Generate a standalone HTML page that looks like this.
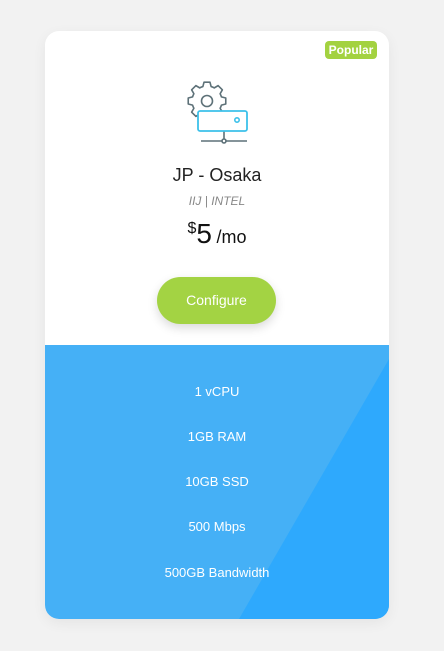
<!DOCTYPE html>
<html><head><style>
body{margin:0;width:444px;height:651px;background:#f2f2f2;font-family:"Liberation Sans",sans-serif;position:relative;overflow:hidden}
.card{position:absolute;left:45px;top:31px;width:344px;height:588px;border-radius:14px;background:#fff;overflow:hidden;box-shadow:0 4px 14px rgba(0,0,0,.06)}
.badge{position:absolute;left:280px;top:10px;width:52px;height:18px;background:#a3d240;border-radius:4px;color:#fff;font-weight:bold;font-size:12px;line-height:18px;text-align:center}
.t{position:absolute;left:0;width:344px;text-align:center}
.blue{position:absolute;left:0;top:314px;width:344px;height:274px;background:#45b0f6}
.btn{position:absolute;left:112px;top:246px;width:119px;height:47px;border-radius:24px;background:#a3d343;color:#fff;font-size:14px;line-height:47px;text-align:center;box-shadow:0 4px 10px rgba(0,0,0,.15)}
.f{position:absolute;left:0;width:344px;text-align:center;color:#fff;font-size:13px}
</style></head><body>
<div class="card">
<div class="badge">Popular</div>
<svg style="position:absolute;left:140px;top:48px" width="68" height="66" viewBox="0 0 68 66">
<g fill="none" stroke="#5d7178" stroke-width="1.6" stroke-linejoin="round">
<path d="M36.42 17.87L40.77 19.03L40.77 24.97L36.42 26.13A15 15 0 0 1 35.12 29.27L37.37 33.17L33.17 37.37L29.27 35.12A15 15 0 0 1 26.13 36.42L24.97 40.77L19.03 40.77L17.87 36.42A15 15 0 0 1 14.73 35.12L10.83 37.37L6.63 33.17L8.88 29.27A15 15 0 0 1 7.58 26.13L3.23 24.97L3.23 19.03L7.58 17.87A15 15 0 0 1 8.88 14.73L6.63 10.83L10.83 6.63L14.73 8.88A15 15 0 0 1 17.87 7.58L19.03 3.23L24.97 3.23L26.13 7.58A15 15 0 0 1 29.27 8.88L33.17 6.63L37.37 10.83L35.12 14.73A15 15 0 0 1 36.42 17.87Z"/>
<circle cx="22" cy="22" r="5.5"/>
<path d="M16 62h46M39 52v10"/>
<circle cx="39" cy="62" r="2" fill="#fff"/>
</g>
<rect x="13" y="32" width="49" height="20" rx="2" fill="#fff" stroke="#3cc1ea" stroke-width="1.8"/>
<circle cx="52" cy="41" r="2.2" fill="none" stroke="#3cc1ea" stroke-width="1.6"/>
</svg>
<div class="t" style="top:134px;font-size:18px;color:#222">JP - Osaka</div>
<div class="t" style="top:163px;font-size:12px;color:#888;font-style:italic">IIJ | INTEL</div>
<div class="t" style="top:187px;color:#111"><span style="font-size:16px;vertical-align:10px">$</span><span style="font-size:28px">5</span> <span style="font-size:18px">/mo</span></div>
<div class="btn">Configure</div>
<div class="blue">
<svg style="position:absolute;left:0;top:0" width="344" height="274"><polygon points="344,14 344,274 194,274" fill="#2ea9fd"/></svg>
</div>
<div class="f" style="top:353px">1 vCPU</div>
<div class="f" style="top:398px">1GB RAM</div>
<div class="f" style="top:443px">10GB SSD</div>
<div class="f" style="top:488px">500 Mbps</div>
<div class="f" style="top:534px">500GB Bandwidth</div>
</div>
</body></html>
